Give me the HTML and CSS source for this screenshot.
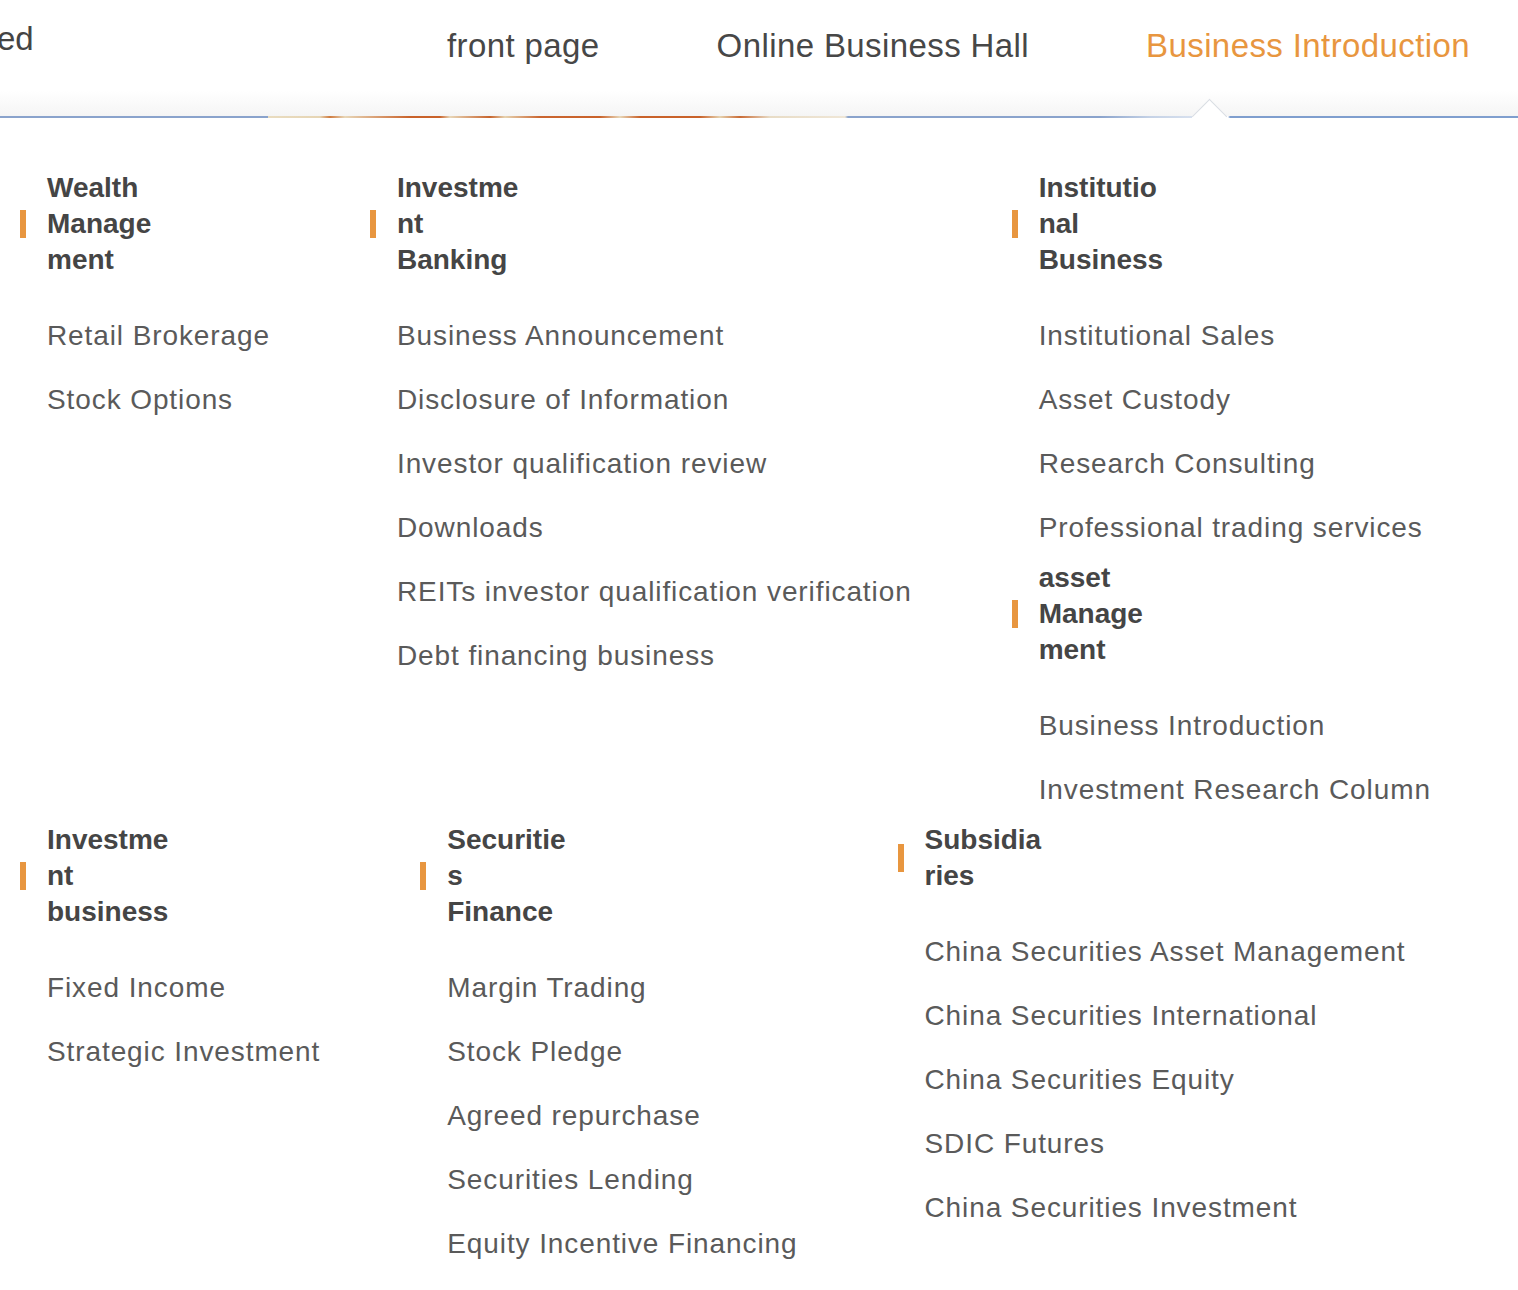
FILE: index.html
```html
<!doctype html>
<html>
<head>
<meta charset="utf-8">
<title>Business Introduction</title>
<link rel="stylesheet" href="styles.css">
</head>

<body>
<div class="header">
	<div class="logo">ed</div>
	<ul class="nav">
		<li><a href="#">front page</a></li>
		<li><a href="#">Online Business Hall</a></li>
		<li class="active"><a href="#">Business Introduction</a></li>
	</ul>
	<span class="notch"></span>
</div>
<div class="header-line"></div>

<div class="menu">
	<div class="menu-row">
		<div class="col">
			<div class="group">
				<h3 class="group-title">Wealth Management</h3>
				<ul class="links">
					<li><a href="#">Retail Brokerage</a></li>
					<li><a href="#">Stock Options</a></li>
				</ul>
			</div>
		</div>
		<div class="col">
			<div class="group">
				<h3 class="group-title">Investment Banking</h3>
				<ul class="links">
					<li><a href="#">Business Announcement</a></li>
					<li><a href="#">Disclosure of Information</a></li>
					<li><a href="#">Investor qualification review</a></li>
					<li><a href="#">Downloads</a></li>
					<li><a href="#">REITs investor qualification verification</a></li>
					<li><a href="#">Debt financing business</a></li>
				</ul>
			</div>
		</div>
		<div class="col">
			<div class="group">
				<h3 class="group-title">Institutional Business</h3>
				<ul class="links">
					<li><a href="#">Institutional Sales</a></li>
					<li><a href="#">Asset Custody</a></li>
					<li><a href="#">Research Consulting</a></li>
					<li><a href="#">Professional trading services</a></li>
				</ul>
			</div>
			<div class="group">
				<h3 class="group-title">asset Management</h3>
				<ul class="links">
					<li><a href="#">Business Introduction</a></li>
					<li><a href="#">Investment Research Column</a></li>
				</ul>
			</div>
		</div>
	</div>
	<div class="menu-row">
		<div class="col">
			<div class="group">
				<h3 class="group-title">Investment business</h3>
				<ul class="links">
					<li><a href="#">Fixed Income</a></li>
					<li><a href="#">Strategic Investment</a></li>
				</ul>
			</div>
		</div>
		<div class="col">
			<div class="group">
				<h3 class="group-title">Securities Finance</h3>
				<ul class="links">
					<li><a href="#">Margin Trading</a></li>
					<li><a href="#">Stock Pledge</a></li>
					<li><a href="#">Agreed repurchase</a></li>
					<li><a href="#">Securities Lending</a></li>
					<li><a href="#">Equity Incentive Financing</a></li>
				</ul>
			</div>
		</div>
		<div class="col">
			<div class="group">
				<h3 class="group-title">Subsidiaries</h3>
				<ul class="links">
					<li><a href="#">China Securities Asset Management</a></li>
					<li><a href="#">China Securities International</a></li>
					<li><a href="#">China Securities Equity</a></li>
					<li><a href="#">SDIC Futures</a></li>
					<li><a href="#">China Securities Investment</a></li>
				</ul>
			</div>
		</div>
	</div>
</div>
</body>
</html>
```

FILE: styles.css
```css
*{margin: 0; padding: 0;}
ul { list-style: none; }
a { text-decoration: none; color: inherit; }
body {
	background: #fff;
	font-family: "Liberation Sans", Arial, sans-serif;
	color: #555;
	overflow: hidden;
}
/*---------------- header ----------------*/
.header {
	position: relative;
	height: 116px;
	display: flex;
	justify-content: space-between;
	background: linear-gradient(#fff 78%, #f5f5f5);
}
.logo {
	margin-left: -3px;
	padding-top: 19px;
	font-size: 33px;
	line-height: 40px;
	color: #444;
	white-space: nowrap;
}
.nav {
	display: flex;
	gap: 117px;
	padding: 26px 48px 0 0;
}
.nav li {
	font-size: 33px;
	line-height: 40px;
	letter-spacing: 0.4px;
	color: #474747;
}
.nav li.active { color: #e8963f; }
.notch {
	position: absolute;
	right: 296px;
	bottom: -13px;
	width: 24px;
	height: 24px;
	background: #fff;
	border-top: 1px solid #d9dde3;
	border-left: 1px solid #d9dde3;
	transform: rotate(45deg);
	z-index: 2;
}
.header-line {
	height: 2px;
	background: linear-gradient(90deg,
		#8aa3cc 0, #8aa3cc 268px,
		#e9dcc0 268px, #e6d5b4 320px, #cf7a3e 330px, #e8d7b8 345px,
		#c9622a 410px, #c9622a 440px, #e8d7b8 450px, #c7632c 490px, #e6d3b0 505px,
		#ca6530 540px, #c9622a 600px, #e8d7b8 620px, #c9622a 640px, #c9622a 700px,
		#e6d3b0 720px, #c96a34 740px, #e8dcc6 770px, #efe6d6 845px,
		#8aa3cc 848px, #8aa3cc 1100px, #c5d2e6 1150px, #d7e0ee 1192px,
		#fff 1192px, #fff 1228px, #7f9ece 1230px, #7f9ece 100%);
}
/*---------------- menu ----------------*/
.menu { padding: 52px 0 0 20px; }
.menu-row {
	display: flex;
	align-items: flex-start;
	gap: 100px;
}
.group-title {
	position: relative;
	width: 126px;
	padding-left: 27px;
	margin-bottom: 26px;
	font-size: 28px;
	line-height: 36px;
	font-weight: bold;
	color: #454545;
	overflow-wrap: break-word;
}
.group-title:before {
	content: '';
	position: absolute;
	left: 0;
	top: 50%;
	width: 6px;
	height: 28px;
	margin-top: -14px;
	background: #e8963f;
}
.links li {
	padding-left: 27px;
	font-size: 28px;
	line-height: 64px;
	letter-spacing: 0.9px;
	color: #5a5a5a;
	white-space: nowrap;
}
```
